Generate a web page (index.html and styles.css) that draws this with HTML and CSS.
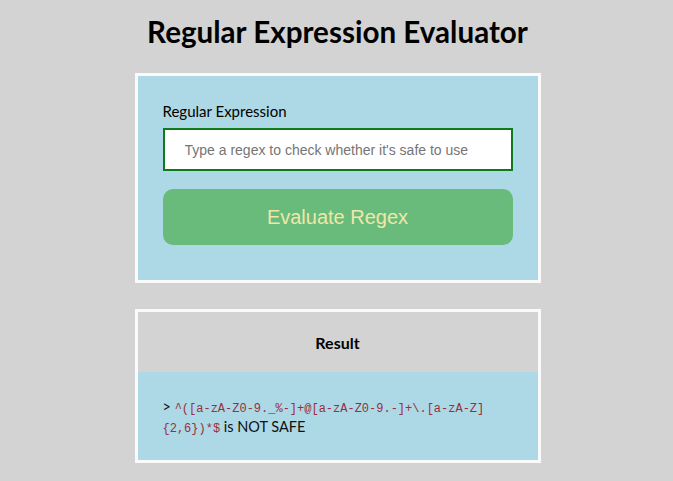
FILE: index.html
```html
<!DOCTYPE html>
<html>
<head>
<meta charset="utf-8">
<link rel="stylesheet" href="styles.css">
</head>
<body>
<h1 class="title">Regular Expression Evaluator</h1>
<div class="card form-card">
  <label class="label" for="rx">Regular Expression</label>
  <input class="input" id="rx" type="text" placeholder="Type a regex to check whether it's safe to use">
  <button class="btn">Evaluate Regex</button>
</div>
<div class="card result-card">
  <div class="result-head">Result</div>
  <div class="result-body">&gt; <code class="code">^([a-zA-Z0-9._%-]+@[a-zA-Z0-9.-]+\.[a-zA-Z]{2,6})*$</code> is NOT SAFE</div>
</div>
</body>
</html>
```
FILE: styles.css
```css
html, body { margin: 0; padding: 0; }
body {
  background: #d3d3d3;
  font-family: Lato, "Open Sans", sans-serif;
  color: #000;
  display: flex;
  flex-direction: column;
  align-items: center;
  padding-top: 14px;
  padding-left: 2px;
}
.title {
  margin: 0 0 23px 0;
  font-size: 29.6px;
  font-weight: 700;
  line-height: 36px;
}
.card {
  width: 400px;
  border: 3px solid #fafafa;
  background: #add8e6;
  box-sizing: content-box;
}
.form-card {
  padding: 25px 25px 35px 25px;
  width: 350px;
  display: flex;
  flex-direction: column;
}
.label {
  font-size: 15px;
  line-height: 20px;
  margin-bottom: 7px;
}
.input {
  height: 43px;
  box-sizing: border-box;
  border: 2px solid #0d7a1d;
  background: #fff;
  padding: 0 20px;
  font-family: "Liberation Sans", Arial, sans-serif;
  font-size: 14px;
  outline: none;
  margin: 0 0 18px 0;
}
.input::placeholder { color: #757575; }
.btn {
  height: 56px;
  border: none;
  border-radius: 10px;
  background: #68bb7b;
  color: #eee8aa;
  font-family: "Liberation Sans", Arial, sans-serif;
  font-size: 20px;
  padding: 0;
}
.result-card {
  margin-top: 26px;
  display: flex;
  flex-direction: column;
}
.result-head {
  background: #d3d3d3;
  height: 60px;
  display: flex;
  align-items: center;
  justify-content: center;
  font-weight: 700;
  font-size: 16px;
}
.result-body {
  height: 88px;
  box-sizing: border-box;
  padding: 26px 25px 0 25px;
  font-size: 14.5px;
  line-height: 18px;
  color: #111;
}
.code {
  font-family: "Liberation Mono", "DejaVu Sans Mono", monospace;
  font-size: 12px;
  color: #9a2f3a;
}
```
